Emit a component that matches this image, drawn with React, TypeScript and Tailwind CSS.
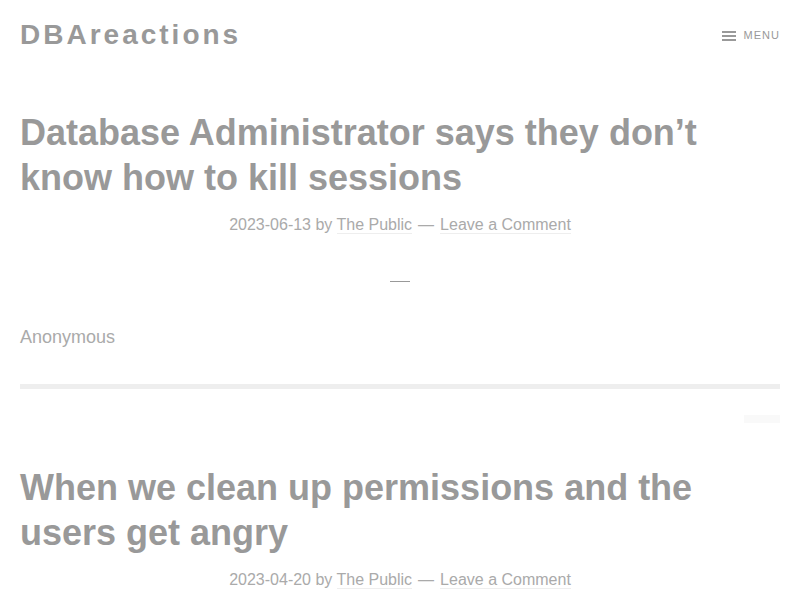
import { useState } from "react";

type Post = {
  title: string;
  date: string;
  body?: string;
};

const posts: Post[] = [
  {
    title: "Database Administrator says they don\u2019t know how to kill sessions",
    date: "2023-06-13",
    body: "Anonymous",
  },
  {
    title: "When we clean up permissions and the users get angry",
    date: "2023-04-20",
  },
];

function PostMeta({ date }: { date: string }) {
  return (
    <p className="text-center text-[16px] leading-6 text-[#aaa]">
      {date} by{" "}
      <a href="#" className="text-[#aaa] border-b border-[#eee]">
        The Public
      </a>
      <span className="mx-[6px]">&mdash;</span>
      <a href="#" className="text-[#aaa] border-b border-[#eee]">
        Leave a Comment
      </a>
    </p>
  );
}

export default function App() {
  const [open, setOpen] = useState(false);

  return (
    <div className="min-h-screen bg-white font-['Liberation_Sans',Arial,sans-serif] px-5">
      <header className="flex items-center justify-between h-[70px]">
        <a href="#" className="text-[28px] font-bold tracking-[3px] text-[#999]">
          DBAreactions
        </a>
        <button
          onClick={() => setOpen(!open)}
          className="flex items-center gap-2 text-[11px] tracking-[1px] uppercase text-[#999]"
        >
          <svg width="14" height="10" viewBox="0 0 14 10" className="mt-[1px]">
            <rect x="0" y="0" width="14" height="2" fill="#999" />
            <rect x="0" y="4" width="14" height="2" fill="#999" />
            <rect x="0" y="8" width="14" height="2" fill="#999" />
          </svg>
          Menu
        </button>
      </header>

      {posts.map((post, i) => (
        <article key={i}>
          <h2
            className={`${i === 0 ? "mt-[40px]" : "mt-[42px]"} text-[36px] leading-[45px] font-bold text-[#999] pr-[80px]`}
          >
            {post.title}
          </h2>
          <div className="mt-[13px]">
            <PostMeta date={post.date} />
          </div>
          {post.body && (
            <>
              <div className="flex justify-center mt-[44px]">
                <div className="w-5 h-px bg-[#999]" />
              </div>
              <p className="mt-[41px] text-[18px] leading-7 text-[#aaa]">{post.body}</p>
              <div className="mt-[33px] h-[5px] bg-[#eee]" />
              <div className="flex justify-end mt-[26px]">
                <div className="w-9 h-2 bg-[#f9f9f9]" />
              </div>
            </>
          )}
        </article>
      ))}
    </div>
  );
}
